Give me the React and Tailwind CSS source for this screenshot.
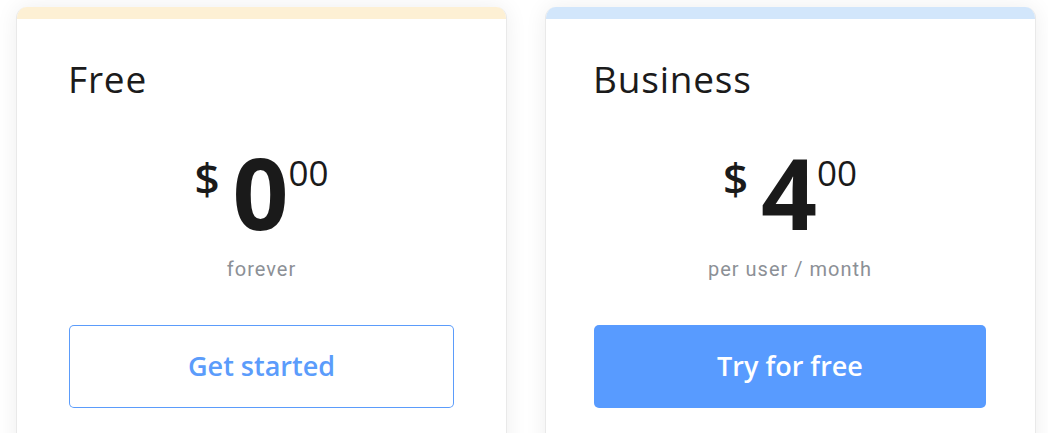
import React from "react";

const plans = [
  {
    name: "Free",
    amount: "0",
    period: "forever",
    strip: "bg-[#fdf0d4]",
    pad: "pl-[52px] pr-[52px]",
    cta: "Get started",
    primary: false,
  },
  {
    name: "Business",
    amount: "4",
    period: "per user / month",
    strip: "bg-[#d2e6fb]",
    pad: "pl-[48px] pr-[49px]",
    cta: "Try for free",
    primary: true,
  },
];

const PlanCard = ({ plan }) => (
  <div className="w-[491px] h-[520px] shrink-0 bg-white rounded-t-[11px] overflow-hidden border border-[#e9e9e9] border-t-0 shadow-[0_0_22px_rgba(0,0,0,0.07)]">
    <div className={`h-[12px] ${plan.strip}`} />
    <div className={`pt-[38px] ${plan.pad}`}>
      <h2 className="-ml-[1px] font-['Open_Sans',sans-serif] text-[37px] leading-[44px] tracking-[0.8px] text-[#1b1b1b]">
        {plan.name}
      </h2>

      <div className="mt-[42px] flex justify-center items-start font-['Open_Sans',sans-serif] text-[#1a1a1a]">
        <span className="mt-[13px] text-[44px] leading-none font-semibold">$</span>
        <span className="ml-[13px] text-[98px] leading-none font-bold">{plan.amount}</span>
        <span className="mt-[12px] text-[35px] leading-none font-medium">00</span>
      </div>

      <p className="mt-[16px] text-center font-['Roboto',sans-serif] text-[20px] leading-[24px] tracking-[1px] text-[#8c9096]">
        {plan.period}
      </p>

      <button
        className={
          plan.primary
            ? "mt-[44px] w-full h-[83px] rounded-[5px] bg-[#589bff] text-white font-['Open_Sans',sans-serif] font-semibold text-[27px]"
            : "mt-[44px] w-full h-[83px] rounded-[5px] shadow-[inset_0_0_0_1px_#5b9cfb] bg-white text-[#5b9cfb] font-['Open_Sans',sans-serif] font-semibold text-[27px]"
        }
      >
        {plan.cta}
      </button>
    </div>
  </div>
);

export default function App() {
  return (
    <div className="w-[1048px] h-[433px] overflow-hidden bg-white">
      <div className="flex gap-[38px] pl-[16px] pt-[7px]">
        {plans.map((plan) => (
          <PlanCard key={plan.name} plan={plan} />
        ))}
      </div>
    </div>
  );
}
